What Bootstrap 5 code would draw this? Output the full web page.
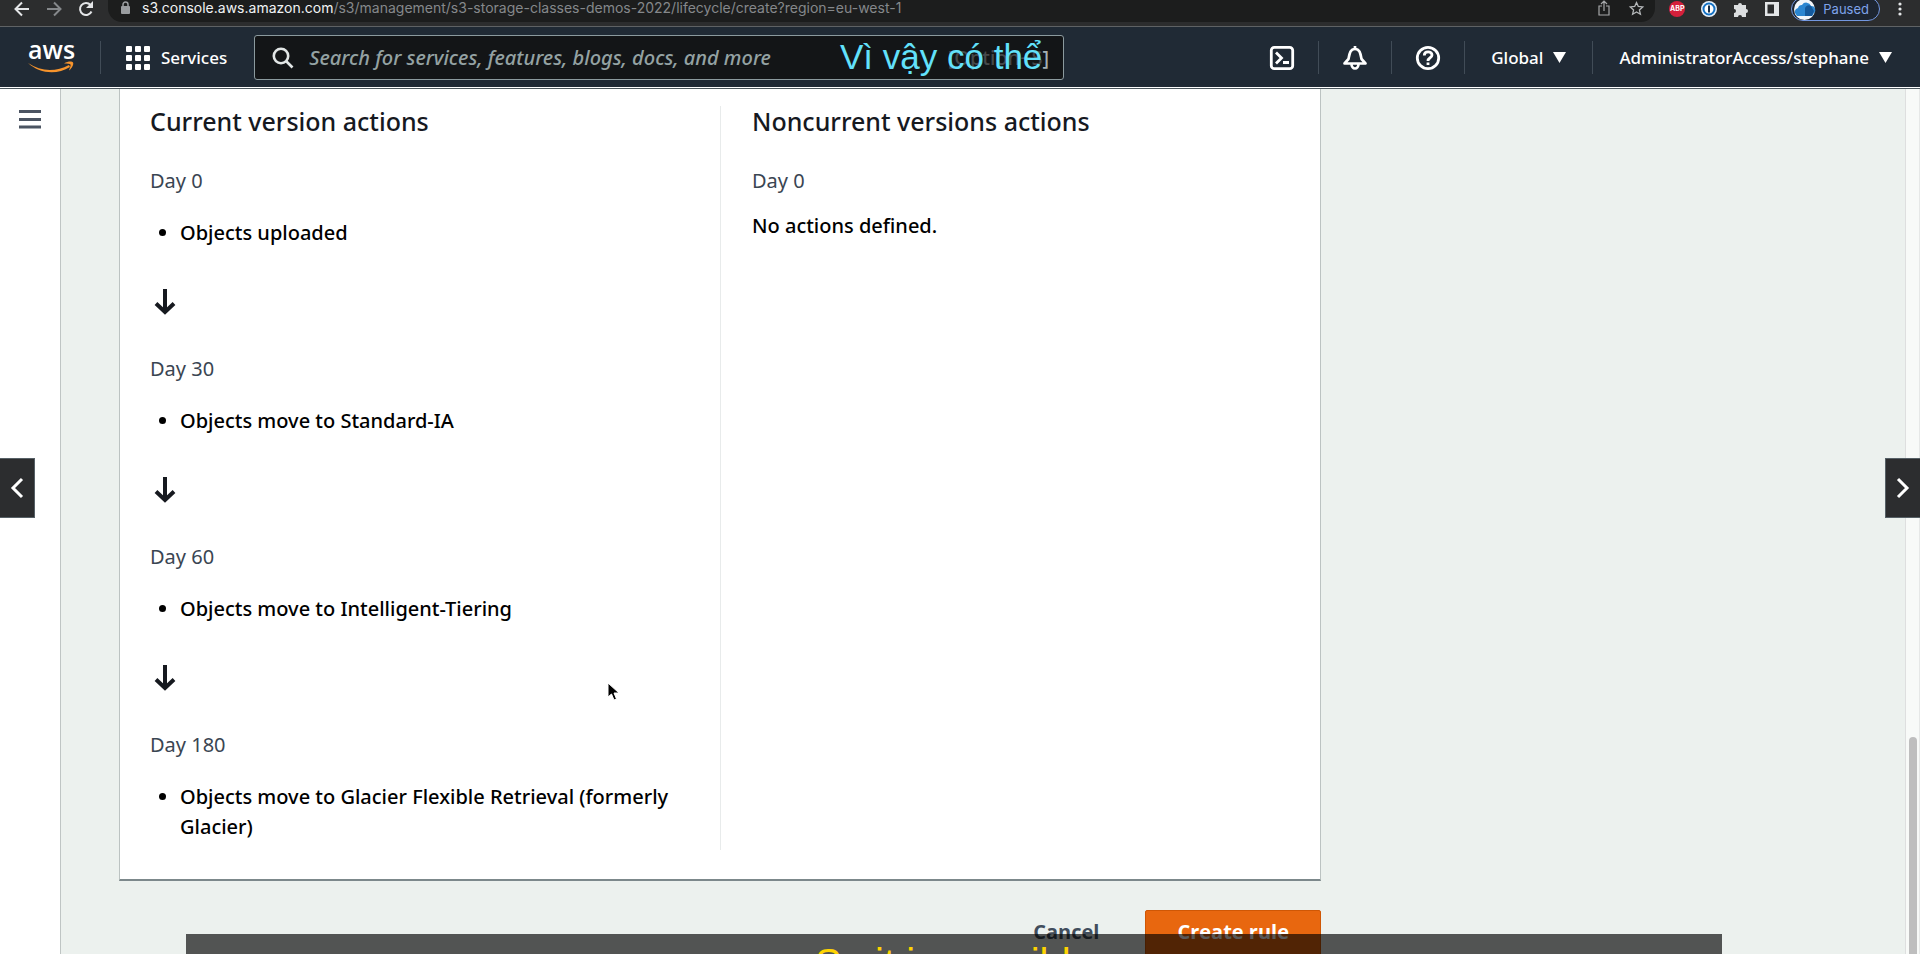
<!DOCTYPE html>
<html lang="en">
<head>
<meta charset="utf-8">
<meta name="viewport" content="width=device-width, initial-scale=1">
<title>Create lifecycle rule</title>
<link href="https://cdn.jsdelivr.net/npm/bootstrap@5.3.0/dist/css/bootstrap.min.css" rel="stylesheet">
<style>
:root { --ember: "Noto Sans", "Open Sans", sans-serif; }
body { font-family: var(--ember); font-size: 20px; line-height: 30px; color: #16191f; background: #ecf1ee; }
svg { display: block; flex: none; overflow: visible; }
.app { height: 100vh; }

/* browser toolbar */
.chrome { height: 27px; background: #2c2d2e; border-bottom: 1px solid #5f6264; font: 14px/18px Inter, sans-serif; }
.chrome-nav { width: 108px; height: 18px; padding-left: 14px; gap: 16px; }
.omnibox { height: 22px; background: #1c1d1d; border-radius: 0 0 14px 14px; padding: 0 11px 6px 12px; gap: 18px; color: #85888b; }
.omnibox b { font-weight: 400; color: #f1f3f4; }
.url { margin-left: -8px; }
.chrome-tools { height: 18px; padding: 0 18px 0 14px; gap: 16px; }
.abp { width: 16px; height: 16px; border-radius: 50%; background: #d4203b; color: #fff; font-size: 7px; line-height: 16px; font-weight: 700; }
.pill { height: 24px; border: 1px solid #7397e0; border-radius: 12px; background: #1d2531; color: #7ea3ea; padding: 0 10px 0 2px; gap: 8px; font-size: 13px; line-height: 18px; margin: 0 2px 0 -4px; }

/* console header */
.console-nav { height: 62px; background: #202a35; border-bottom: 1px solid #4b565c; padding: 0 28px 0 27px; font-size: 17px; line-height: 24px; font-weight: 500; box-shadow: inset 0 -1px #fff; }
.nav-link-btn { color: #fff; background: none; border: 0; padding: 0; gap: 10px; font-weight: 500; }
.menu-btn { margin: 0 3px; }
.icon-set .menu-btn:last-child { margin-right: 0; }
.rule { width: 1px; height: 33px; background: #414c57; flex: none; }
.search { width: 810px; height: 45px; margin-left: 27px; background: #131517; border: 1px solid #8b9a9e; border-radius: 3px; padding: 0 14px 0 17px; gap: 15px; }
.search input { background: none; border: 0; outline: 0; padding: 0; color: #fff; font-style: italic; font-weight: 500; font-size: 20px; }
.search input::placeholder { color: #94a2a3; opacity: 1; }
.hint { font-size: 20px; font-weight: 500; color: #45494b; }
.hint span { color: #a3b0b3; }
.icon-set { gap: 23px; }

/* page */
.side { width: 61px; background: #fff; border-right: 1px solid #bfc5c4; }
.side button { border: 0; background: none; padding: 21px 0 0 19px; }
.content { padding: 0 48px 0 58px; }
.panel { max-width: 1202px; background: #fff; border: 1px solid #bcc3c2; border-top: 0; border-bottom: 2px solid #7c888b; padding: 17px 30px 29px; }
.timeline-col + .timeline-col { border-left: 1px solid #e8ebeb; padding-left: 31px; }
.panel h2 { font-size: 25px; line-height: 30px; font-weight: 500; margin-bottom: 30px; }
.day { color: #3a4552; }
.steps { margin: 22px 0 41px; padding-left: 30px; font-weight: 500; color: #000; }
.note { margin-top: 15px; font-weight: 500; color: #000; }
.arrow { margin: 0 0 39px 4px; }
.actions { max-width: 1202px; margin-top: 29px; gap: 15px; }
.action { border: 0; border-radius: 2px; height: 46px; font-size: 20px; line-height: 30px; font-weight: 700; padding: 0 31px 2px; font-family: "Open Sans", sans-serif; }
.action-plain { background: none; color: #414d5c; }
.action-main { background: #e8670f; color: #fff; border: 1px solid #cf5705; }
.track { width: 15px; background: #f8faf8; border-left: 1px solid #dedfdf; border-right: 1px solid #e6e8e7; padding: 648px 2px 0 3px; }
.thumb { background: #bebebe; border-radius: 4px 4px 0 0; }

/* player layers over the page */
.step-btn { width: 35px; height: 60px; top: 458px; background: #2c2d2f; border: 1px solid #566066; padding: 0; color: #fff; }
.step-prev { left: 0; border-left: 0; }
.step-next { right: 0; border-right: 0; }
.subtitle-top { left: 840px; top: 35px; font: 35px/44px "Liberation Sans", sans-serif; color: #62e1fb; }
.subtitle-bar { left: 186px; right: 198px; top: 934px; height: 20px; background: rgba(0,0,0,.65); color: #ffd400; font: 40px/46px "Liberation Sans", sans-serif; padding-top: 6px; }
.pointer { left: 607px; top: 682px; }
</style>
</head>
<body>
<div class="app d-flex flex-column position-relative overflow-hidden">

  <header class="chrome d-flex align-items-start flex-shrink-0">
    <div class="chrome-nav d-flex align-items-center flex-shrink-0">
      <svg width="16" height="16" viewBox="0 0 16 16" fill="none" stroke="#e4e6e8" stroke-width="2"><path d="M15 8H2M8 1.500L1.500 8 8 14.500"/></svg>
      <svg width="16" height="16" viewBox="0 0 16 16" fill="none" stroke="#85888b" stroke-width="2"><path d="M1 8h13M8 1.500L14.500 8 8 14.500"/></svg>
      <svg width="16" height="16" viewBox="0 0 16 16" fill="none" stroke="#e4e6e8" stroke-width="2"><path d="M13.500 10.500A6 6 0 1 1 12.500 4L14 6"/><path d="M15 0v7H8z" fill="#e4e6e8" stroke="none"/></svg>
    </div>
    <div class="omnibox d-flex align-items-center flex-grow-1">
      <svg width="12" height="14" viewBox="0 0 12 14"><rect x="1" y="5" width="9" height="8" rx="1" fill="#9a9da0"/><path d="M3 5.500V3.500a2.500 2.500 0 0 1 5 0v2" fill="none" stroke="#9a9da0" stroke-width="1.500"/></svg>
      <div class="flex-grow-1 text-nowrap url"><b>s3.console.aws.amazon.com</b>/s3/management/s3-storage-classes-demos-2022/lifecycle/create?region=eu-west-1</div>
      <svg width="14" height="16" viewBox="0 0 14 16" fill="none" stroke="#a5a7a9" stroke-width="1.200"><path d="M5 6H2v9h10V6H9M7 11V1M4 4l3-3 3 3"/></svg>
      <svg width="15" height="15" viewBox="0 0 15 15" fill="none" stroke="#b5b8ba" stroke-width="1.300"><path d="M7.500 1.500l1.800 4 4.400.4-3.300 3 1 4.300-3.900-2.300-3.900 2.300 1-4.300-3.300-3 4.400-.4z"/></svg>
    </div>
    <div class="chrome-tools d-flex align-items-center flex-shrink-0">
      <span class="abp text-center">ABP</span>
      <svg width="16" height="16" viewBox="0 0 16 16"><circle cx="8" cy="8" r="8" fill="#e8f1fa"/><circle cx="8" cy="8" r="5.500" fill="#fff" stroke="#1471c4" stroke-width="2"/><rect x="7" y="4.500" width="2" height="7" fill="#16304c"/></svg>
      <svg width="16" height="16" viewBox="0 0 16 16" fill="#dcdee0"><path d="M1 4h4a2 2 0 1 1 4 0h4v4a2 2 0 1 1 0 4v4H9a2 2 0 1 0-4 0H1v-4a2 2 0 1 0 0-4z"/></svg>
      <svg width="14" height="14" viewBox="0 0 14 14"><path fill="#e4e6e8" fill-rule="evenodd" d="M0 0h14v14H0zM2.500 2.500v9h6.500v-9z"/></svg>
      <button class="pill d-flex align-items-center" type="button">
        <svg width="21" height="21" viewBox="0 0 21 21"><circle cx="10.500" cy="10.500" r="10.500" fill="#f2f6fa"/><path d="M1 14a4 4 0 0 1 3-5 4 4 0 0 1 4-3 5 5 0 0 1 9 1 4 4 0 0 1 3 7l-2 3H3z" fill="#2b86d1"/><path d="M11 17V9a4 4 0 0 1 6-2l3 5-2 5z" fill="#14599c"/></svg>
        Paused</button>
      <svg width="4" height="16" viewBox="0 0 4 16" fill="#e4e6e8"><circle cx="2" cy="3" r="1.600"/><circle cx="2" cy="8" r="1.600"/><circle cx="2" cy="13" r="1.600"/></svg>
    </div>
  </header>

  <nav class="console-nav d-flex align-items-center flex-shrink-0 text-white">
    <a href="#" aria-label="AWS home"><svg width="49" height="40" viewBox="0 -4 49 40"><text x="1" y="17" font-family="Open Sans, sans-serif" font-size="25" font-weight="600" fill="#fff">aws</text><path d="M1 21c13 9 28 9 41 2l1 2C30 33 13 32 1 21z" fill="#f7942c"/><path d="M37 21.500c4-2.500 8-2.500 9-1s-1 6-4 8c1-3 2-5 1.500-6s-3-1-6.500-1z" fill="#f7942c"/></svg></a>
    <div class="rule ms-4"></div>
    <button type="button" class="nav-link-btn d-flex align-items-center ms-4">
      <svg width="26" height="26" viewBox="0 0 26 26" fill="#fff"><rect x="1" y="1" width="6" height="6" rx="1"/><rect x="10" y="1" width="6" height="6" rx="1"/><rect x="19" y="1" width="6" height="6" rx="1"/><rect x="1" y="10" width="6" height="6" rx="1"/><rect x="10" y="10" width="6" height="6" rx="1"/><rect x="19" y="10" width="6" height="6" rx="1"/><rect x="1" y="19" width="6" height="6" rx="1"/><rect x="10" y="19" width="6" height="6" rx="1"/><rect x="19" y="19" width="6" height="6" rx="1"/></svg>
      Services</button>
    <form class="search d-flex align-items-center">
      <svg width="22" height="22" viewBox="0 0 22 22" fill="none" stroke="#e2e6e6" stroke-width="2.600"><circle cx="9" cy="9" r="7.200"/><path d="M14 14l6.500 6.500"/></svg>
      <input class="flex-grow-1" type="text" aria-label="Search" placeholder="Search for services, features, blogs, docs, and more">
      <div class="hint">[Option+S<span>]</span></div>
    </form>
    <div class="icon-set d-flex align-items-center ms-auto">
      <button type="button" class="nav-link-btn" aria-label="CloudShell"><svg width="26" height="26" viewBox="0 0 26 26" fill="none" stroke="#fff" stroke-width="2.800"><rect x="2.300" y="2.300" width="21.400" height="21.400" rx="3"/><path d="M7 7.500l5.500 5.500L7 18.500M14 17.500h6"/></svg></button>
      <div class="rule"></div>
      <button type="button" class="nav-link-btn" aria-label="Notifications"><svg width="26" height="26" viewBox="0 0 26 26" fill="none" stroke="#fff" stroke-width="2.700" stroke-linejoin="round"><path d="M13 1v3M2.500 18.500L6.500 14c1-5 1.500-10 6.500-10s5.500 5 6.500 10l4 4.500zM9.500 19a3.500 4.500 0 0 0 7 0"/></svg></button>
      <div class="rule"></div>
      <button type="button" class="nav-link-btn" aria-label="Help"><svg width="26" height="26" viewBox="0 0 26 26" fill="none" stroke="#fff" stroke-width="2.800"><circle cx="13" cy="13" r="10.700"/><path d="M9.300 10.500C9.300 5.500 17 6 17 10c0 3-4 2.500-4 6M13 17.500v2.500"/></svg></button>
      <div class="rule"></div>
      <button type="button" class="nav-link-btn menu-btn d-flex align-items-center">Global <svg width="13" height="11" viewBox="0 0 13 11" fill="#fff"><path d="M0 0h13L6.500 11z"/></svg></button>
      <div class="rule"></div>
      <button type="button" class="nav-link-btn menu-btn d-flex align-items-center">AdministratorAccess/stephane <svg width="13" height="11" viewBox="0 0 13 11" fill="#fff"><path d="M0 0h13L6.500 11z"/></svg></button>
    </div>
  </nav>

  <div class="d-flex flex-grow-1 overflow-hidden">
    <aside class="side flex-shrink-0"><button type="button" aria-label="Open navigation"><svg width="22" height="19" viewBox="0 0 22 19" fill="#4b5462"><path d="M0 0h22v3H0zM0 8h22v3H0zM0 15.500h22v3H0z"/></svg></button></aside>
    <main class="content flex-grow-1">
      <section class="panel">
        <div class="row gx-0">
          <div class="col-6 timeline-col">
            <h2>Current version actions</h2>
            <div class="day">Day 0</div>
            <ul class="steps"><li>Objects uploaded</li></ul>
            <svg class="arrow" width="22" height="26" viewBox="0 0 22 26" fill="none" stroke="#16191f" stroke-width="4"><path d="M11 0v23M2 14.500l9 8.500 9-8.500"/></svg>
            <div class="day">Day 30</div>
            <ul class="steps"><li>Objects move to Standard-IA</li></ul>
            <svg class="arrow" width="22" height="26" viewBox="0 0 22 26" fill="none" stroke="#16191f" stroke-width="4"><path d="M11 0v23M2 14.500l9 8.500 9-8.500"/></svg>
            <div class="day">Day 60</div>
            <ul class="steps"><li>Objects move to Intelligent-Tiering</li></ul>
            <svg class="arrow" width="22" height="26" viewBox="0 0 22 26" fill="none" stroke="#16191f" stroke-width="4"><path d="M11 0v23M2 14.500l9 8.500 9-8.500"/></svg>
            <div class="day">Day 180</div>
            <ul class="steps mb-2"><li>Objects move to Glacier Flexible Retrieval (formerly Glacier)</li></ul>
          </div>
          <div class="col-6 timeline-col">
            <h2>Noncurrent versions actions</h2>
            <div class="day">Day 0</div>
            <div class="note">No actions defined.</div>
          </div>
        </div>
      </section>
      <div class="actions d-flex justify-content-end">
        <button type="button" class="action action-plain">Cancel</button>
        <button type="button" class="action action-main">Create rule</button>
      </div>
    </main>
    <div class="track flex-shrink-0 d-flex"><div class="thumb flex-grow-1"></div></div>
  </div>

  <button type="button" class="step-btn step-prev position-absolute d-flex align-items-center justify-content-center" aria-label="Previous"><svg width="14" height="20" viewBox="0 0 14 20" fill="none" stroke="#fff" stroke-width="3"><path d="M12 1L3 10l9 9"/></svg></button>
  <button type="button" class="step-btn step-next position-absolute d-flex align-items-center justify-content-center" aria-label="Next"><svg width="14" height="20" viewBox="0 0 14 20" fill="none" stroke="#fff" stroke-width="3"><path d="M2 1l9 9-9 9"/></svg></button>
  <svg class="pointer position-absolute" width="14" height="20" viewBox="0 0 14 20"><path d="M1 1v14l3.500-3 2.500 6 2.500-1-2.500-6H12z" fill="#000" stroke="#fff"/></svg>
  <div class="subtitle-top position-absolute text-nowrap" lang="vi">Vì vậy có thể</div>
  <div class="subtitle-bar position-absolute overflow-hidden text-center">So it is possible</div>
</div>
<script src="https://cdn.jsdelivr.net/npm/bootstrap@5.3.0/dist/js/bootstrap.bundle.min.js"></script>
</body>
</html>
